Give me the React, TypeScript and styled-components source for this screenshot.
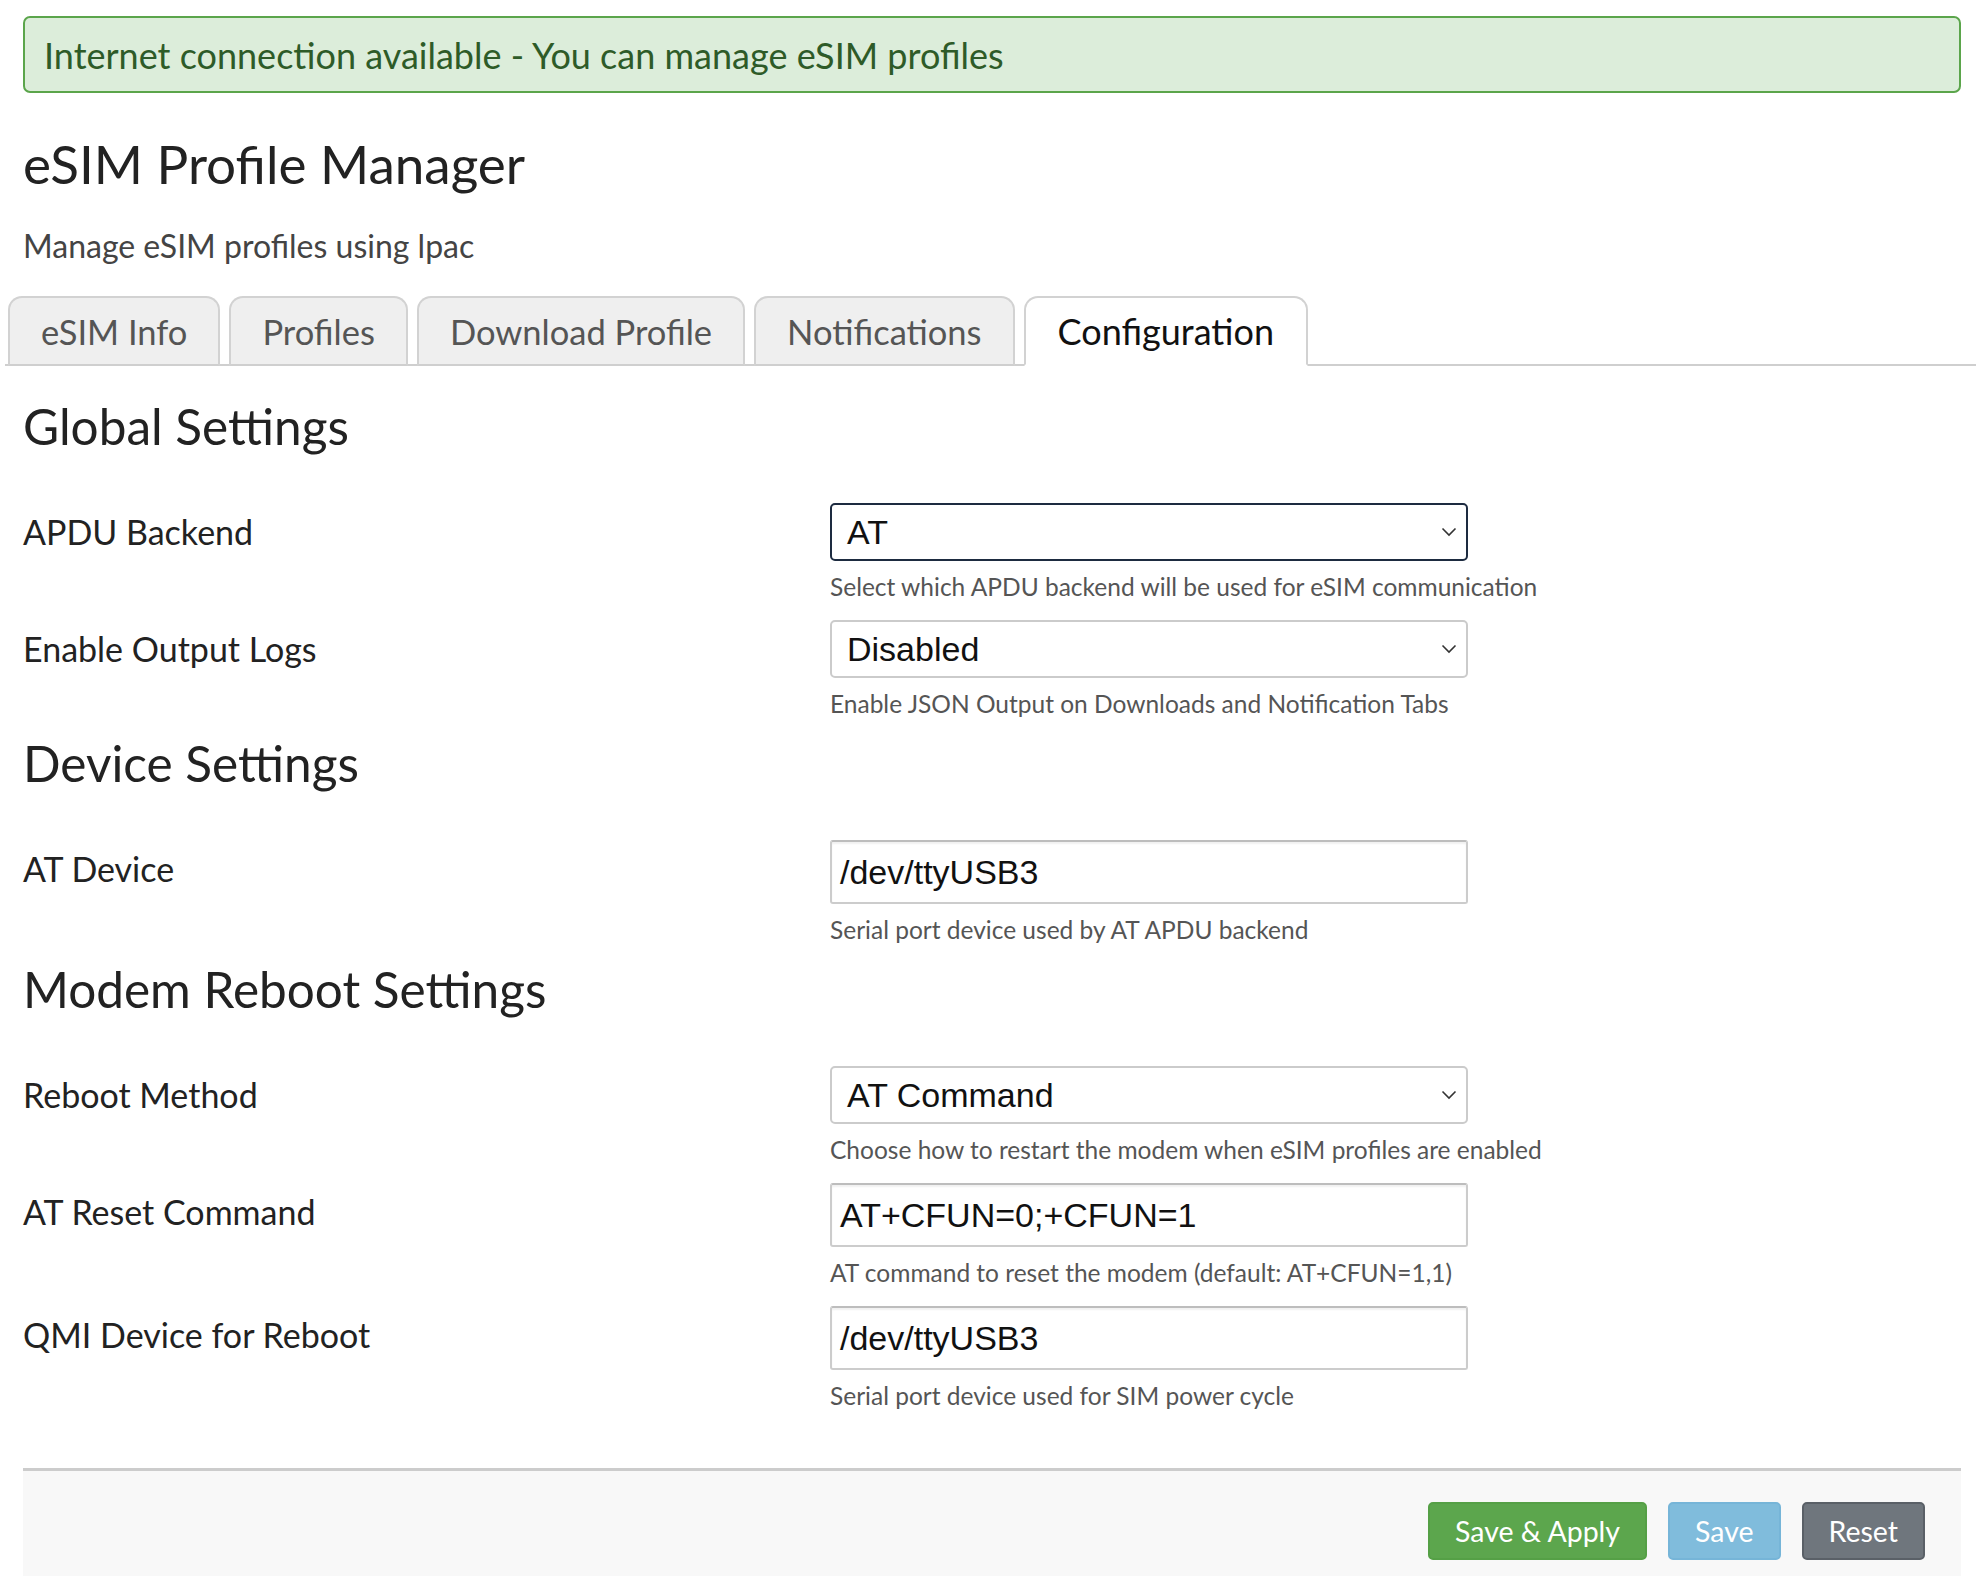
import React from 'react';
import styled, { createGlobalStyle } from 'styled-components';

const GlobalStyle = createGlobalStyle`
    body {
        margin: 0;
        background: #ffffff;
        font-family: Lato, "Noto Sans", sans-serif;
        color: #222;
    }
`;

const Page = styled.div`
    padding: 16px 15px 0 23px;
`;

const Alert = styled.div`
    box-sizing: border-box;
    height: 77px;
    display: flex;
    align-items: center;
    padding-left: 19px;
    background: #dcedda;
    border: 2px solid #5ba54b;
    border-radius: 7px;
    color: #2e5b28;
    font-size: 36px;
`;

const Title = styled.h1`
    margin: 41px 0 0;
    font-size: 53px;
    font-weight: 400;
    line-height: 60px;
    color: #222;
`;

const Subtitle = styled.div`
    margin-top: 34px;
    font-size: 32px;
    line-height: 36px;
    color: #444;
`;

const TabBar = styled.div`
    display: flex;
    gap: 9px;
    margin: 32px -15px 0 -18px;
    padding-left: 3px;
    border-bottom: 2px solid #cfcfcf;
`;

const Tab = styled.div<{ $active?: boolean }>`
    box-sizing: border-box;
    height: 70px;
    display: flex;
    align-items: center;
    padding: 0 ${p => (p.$active ? '32px' : '31px')};
    margin-bottom: -2px;
    border: 2px solid #d2d2d2;
    border-bottom-color: ${p => (p.$active ? '#ffffff' : '#cfcfcf')};
    border-radius: 14px 14px 0 0;
    background: ${p => (p.$active ? '#ffffff' : '#efefef')};
    color: ${p => (p.$active ? '#111' : '#555')};
    font-size: ${p => (p.$active ? '36px' : '34.5px')};
`;

const SectionTitle = styled.h2<{ $first?: boolean }>`
    margin: ${p => (p.$first ? '34px' : '0')} 0 51px;
    font-size: 49.5px;
    font-weight: 400;
    line-height: 52px;
    color: #222;
`;

const Row = styled.div`
    display: grid;
    grid-template-columns: 807px 638px;
    margin-bottom: 19px;
`;

const Label = styled.div`
    font-size: 34px;
    line-height: 58px;
    color: #222;
`;

const Field = styled.div`
    display: flex;
    flex-direction: column;
`;

const SelectBox = styled.div<{ $focused?: boolean }>`
    position: relative;
    box-sizing: border-box;
    height: 58px;
    display: flex;
    align-items: center;
    padding-left: 15px;
    border: 2px solid ${p => (p.$focused ? '#1d2b40' : '#cbcbcb')};
    border-radius: 5px;
    background: #fff;
    font-family: "Liberation Sans", Arial, sans-serif;
    font-size: 34px;
    color: #111;
`;

const Chevron = styled.svg`
    position: absolute;
    right: 9px;
    top: 50%;
    margin-top: -5px;
`;

const TextInput = styled.div`
    box-sizing: border-box;
    height: 64px;
    display: flex;
    align-items: center;
    padding-left: 8px;
    border: 2px solid #cccccc;
    border-top-color: #bdbdbd;
    border-radius: 3px;
    box-shadow: inset 0 2px 2px rgba(0, 0, 0, 0.06);
    background: #fff;
    font-family: "Liberation Sans", Arial, sans-serif;
    font-size: 34px;
    color: #111;
`;

const Help = styled.div`
    margin-top: 12px;
    font-size: 24.5px;
    line-height: 28px;
    color: #555;
    white-space: nowrap;
`;

const Footer = styled.div`
    display: flex;
    justify-content: flex-end;
    gap: 21px;
    margin-top: 58px;
    padding: 31px 36px 17px;
    border-top: 3px solid #cccccc;
    background: #f8f8f8;
`;

const Button = styled.button<{ $color: string; $edge: string }>`
    height: 58px;
    padding: 0 25px;
    border: 2px solid ${p => p.$edge};
    border-radius: 5px;
    background: ${p => p.$color};
    color: #fff;
    font-family: Lato, sans-serif;
    font-size: 28.5px;
`;

function Select(props: { value: string; focused?: boolean }) {
    return (
        <SelectBox $focused={props.focused}>
            {props.value}
            <Chevron width="16" height="10" viewBox="0 0 16 10">
                <path d="M1.5 1.5 L8 8 L14.5 1.5" fill="none" stroke="#333" strokeWidth="1.6" />
            </Chevron>
        </SelectBox>
    );
}

const tabs = ['eSIM Info', 'Profiles', 'Download Profile', 'Notifications', 'Configuration'];

export default function App() {
    return (
        <Page>
            <GlobalStyle />
            <Alert>Internet connection available - You can manage eSIM profiles</Alert>
            <Title>eSIM Profile Manager</Title>
            <Subtitle>Manage eSIM profiles using lpac</Subtitle>
            <TabBar>
                {tabs.map(t => (
                    <Tab key={t} $active={t === 'Configuration'}>{t}</Tab>
                ))}
            </TabBar>

            <SectionTitle $first>Global Settings</SectionTitle>
            <Row>
                <Label>APDU Backend</Label>
                <Field>
                    <Select value="AT" focused />
                    <Help>Select which APDU backend will be used for eSIM communication</Help>
                </Field>
            </Row>
            <Row>
                <Label>Enable Output Logs</Label>
                <Field>
                    <Select value="Disabled" />
                    <Help>Enable JSON Output on Downloads and Notification Tabs</Help>
                </Field>
            </Row>

            <SectionTitle>Device Settings</SectionTitle>
            <Row>
                <Label>AT Device</Label>
                <Field>
                    <TextInput>/dev/ttyUSB3</TextInput>
                    <Help>Serial port device used by AT APDU backend</Help>
                </Field>
            </Row>

            <SectionTitle>Modem Reboot Settings</SectionTitle>
            <Row>
                <Label>Reboot Method</Label>
                <Field>
                    <Select value="AT Command" />
                    <Help>Choose how to restart the modem when eSIM profiles are enabled</Help>
                </Field>
            </Row>
            <Row>
                <Label>AT Reset Command</Label>
                <Field>
                    <TextInput>AT+CFUN=0;+CFUN=1</TextInput>
                    <Help>AT command to reset the modem (default: AT+CFUN=1,1)</Help>
                </Field>
            </Row>
            <Row>
                <Label>QMI Device for Reboot</Label>
                <Field>
                    <TextInput>/dev/ttyUSB3</TextInput>
                    <Help>Serial port device used for SIM power cycle</Help>
                </Field>
            </Row>

            <Footer>
                <Button $color="#5ca64d" $edge="#55a046">Save &amp; Apply</Button>
                <Button $color="#80bcdc" $edge="#76b5d8">Save</Button>
                <Button $color="#6f767d" $edge="#5a6067">Reset</Button>
            </Footer>
        </Page>
    );
}
